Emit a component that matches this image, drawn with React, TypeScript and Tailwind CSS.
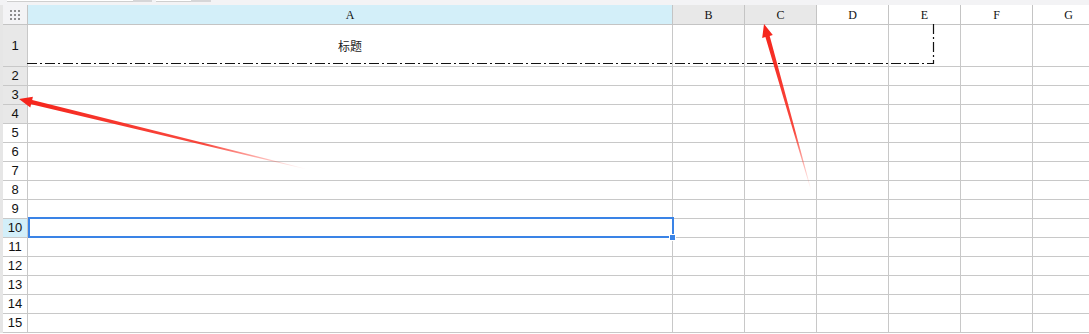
import React from "react";

const cols = ["A", "B", "C", "D", "E", "F", "G"];
const colBg: Record<string, string> = {
  A: "bg-[#d3eff9]",
  B: "bg-[#e8e8e8]",
  C: "bg-[#e8e8e8]",
};
const rows = Array.from({ length: 15 }, (_, i) => i + 1);

function rowHeadBg(r: number) {
  if (r === 10) return "bg-[#d3eff9]";
  if (r <= 4) return "bg-[#e8e8e8]";
  return "bg-white";
}

type Pt = [number, number];

// tapered annotation arrow, thin at the tail, full width at the head
function arrowPoints(tail: Pt, tip: Pt, headLen = 13, headW = 11, shaftW = 4.5) {
  const dx = tip[0] - tail[0];
  const dy = tip[1] - tail[1];
  const len = Math.hypot(dx, dy);
  const ux = dx / len;
  const uy = dy / len;
  const nx = -uy;
  const ny = ux;
  const bx = tip[0] - ux * headLen;
  const by = tip[1] - uy * headLen;
  const p = (x: number, y: number) => `${x.toFixed(1)},${y.toFixed(1)}`;
  return [
    p(tail[0] + nx * 0.3, tail[1] + ny * 0.3),
    p(bx + (nx * shaftW) / 2, by + (ny * shaftW) / 2),
    p(bx + (nx * headW) / 2, by + (ny * headW) / 2),
    p(tip[0], tip[1]),
    p(bx - (nx * headW) / 2, by - (ny * headW) / 2),
    p(bx - (nx * shaftW) / 2, by - (ny * shaftW) / 2),
    p(tail[0] - nx * 0.3, tail[1] - ny * 0.3),
  ].join(" ");
}

function Arrow({ id, tail, tip }: { id: string; tail: Pt; tip: Pt }) {
  return (
    <>
      <defs>
        <linearGradient
          id={id}
          gradientUnits="userSpaceOnUse"
          x1={tail[0]}
          y1={tail[1]}
          x2={tip[0]}
          y2={tip[1]}
        >
          <stop offset="0" stopColor="#ff3b30" stopOpacity="0" />
          <stop offset="0.35" stopColor="#f82a1e" stopOpacity="0.85" />
          <stop offset="1" stopColor="#f5231a" stopOpacity="1" />
        </linearGradient>
      </defs>
      <polygon points={arrowPoints(tail, tip)} fill={`url(#${id})`} />
    </>
  );
}

function CornerDots() {
  return (
    <svg width="12" height="12" viewBox="0 0 12 12">
      {[0, 4, 8].map((y) =>
        [0, 4, 8].map((x) => (
          <rect key={`${x}-${y}`} x={x + 1} y={y + 1} width="2" height="2" fill="#8c8c8c" />
        ))
      )}
    </svg>
  );
}

export default function App() {
  return (
    <div className="relative w-[1089px] h-[334px] overflow-hidden bg-white font-['Liberation_Sans',sans-serif]">
      {/* toolbar remnant */}
      <div className="flex h-[5px] bg-[#f3f3f5] items-start">
        <div className="ml-[7px] w-[126px] h-[2px] bg-white border-b border-[#cfcfcf]" />
        <div className="w-[19px] h-[2px] bg-[#d6d6d8]" />
        <div className="ml-[4px] w-[35px] h-[2px] bg-white border-b border-[#cfcfcf]" />
        <div className="w-[20px] h-[2px] bg-[#d6d6d8]" />
      </div>

      <div className="flex">
        <div className="w-[3px] shrink-0 bg-[#e6e6e6]" />
        <div className="grid grid-cols-[25px_645px_72px_72px_72px_72px_72px_72px] grid-rows-[20px_42px_repeat(14,19px)] shrink-0">
          <div className="flex items-center justify-center bg-[#f3f3f5] border-r border-b border-[#c4c4c4]">
            <CornerDots />
          </div>
          {cols.map((c) => (
            <div
              key={c}
              className={`flex items-center justify-center border-r border-b border-[#c4c4c4] text-[12px] text-[#111] font-['Liberation_Serif',serif] ${colBg[c] ?? "bg-white"}`}
            >
              {c}
            </div>
          ))}
          {rows.map((r) => (
            <React.Fragment key={r}>
              <div
                className={`flex items-center justify-center border-r border-b border-[#c8c8c8] text-[13px] text-[#111] ${rowHeadBg(r)}`}
              >
                {r}
              </div>
              {cols.map((c) => (
                <div
                  key={c}
                  className="flex items-center justify-center border-r border-b border-[#c8c8c8] text-[12px] text-[#222] font-['Noto_Sans_CJK_SC',sans-serif]"
                >
                  {r === 1 && c === "A" ? "标题" : null}
                </div>
              ))}
            </React.Fragment>
          ))}
        </div>
      </div>

      {/* selection on A10 */}
      <div className="absolute left-[28px] top-[217px] w-[646px] h-[21px] border-2 border-[#3a83e6]" />
      <div className="absolute left-[669px] top-[234px] w-[7px] h-[7px] bg-[#3a83e6] border border-white" />

      <svg className="absolute inset-0 pointer-events-none" width="1089" height="334">
        <path
          d="M27 63.5 H933.5 V24"
          fill="none"
          stroke="#111"
          strokeWidth="1.2"
          strokeDasharray="10 3 2 3"
        />
        <Arrow id="arr1" tail={[306, 169]} tip={[19, 99]} />
        <Arrow id="arr2" tail={[811, 190]} tip={[764, 24]} />
      </svg>
    </div>
  );
}
